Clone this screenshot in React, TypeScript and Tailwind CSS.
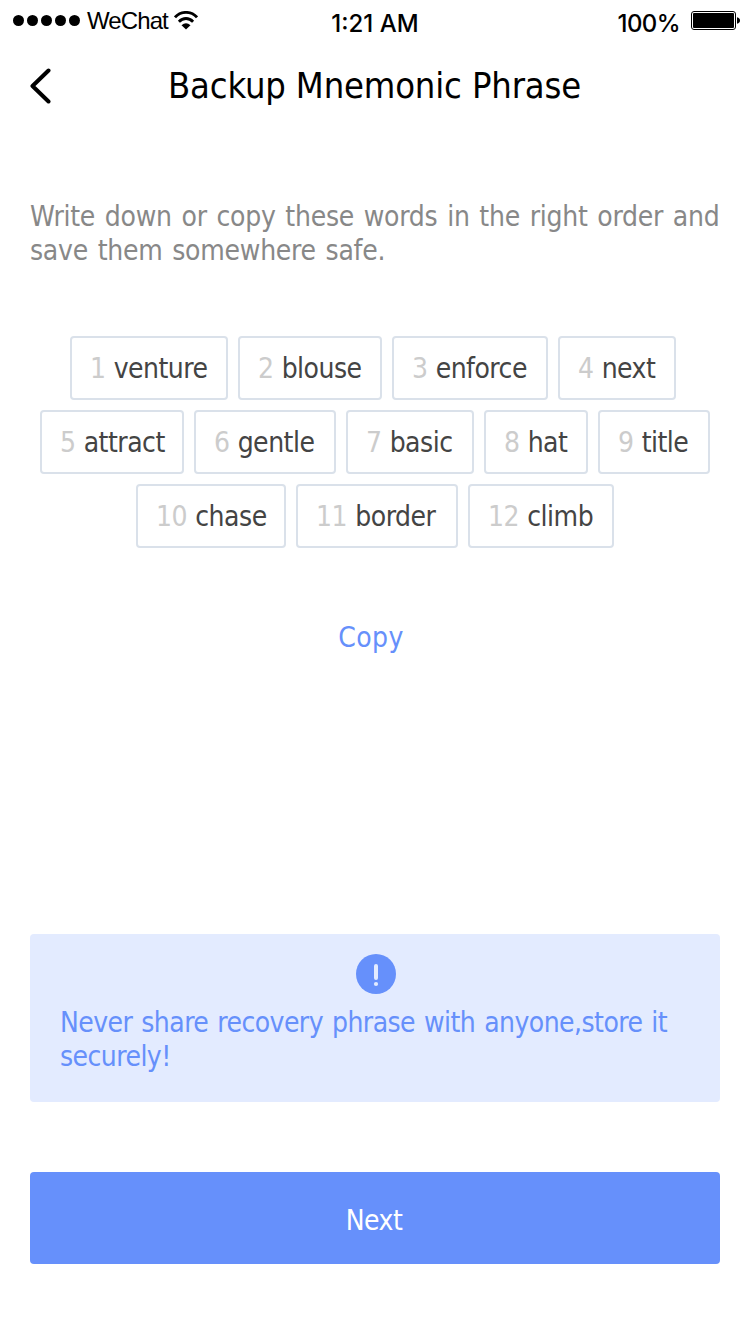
const rows = [
  { start: 1, pad: "pl-[70px]", words: [["venture", "w-[158px]"], ["blouse", "w-[144px]"], ["enforce", "w-[156px]"], ["next", "w-[118px]"]] },
  { start: 5, pad: "pl-[40px]", words: [["attract", "w-[144px]"], ["gentle", "w-[142px]"], ["basic", "w-[128px]"], ["hat", "w-[104px]"], ["title", "w-[112px]"]] },
  { start: 10, pad: "pl-[136px]", words: [["chase", "w-[150px]"], ["border", "w-[162px]"], ["climb", "w-[146px]"]] },
];

function StatusBar() {
  return (
    <header className="grid h-10 shrink-0 grid-cols-3 items-center pl-[13px] pr-[10px] text-black">
      <div className="flex items-center">
        <div className="flex gap-[3px]">
          {[0, 1, 2, 3, 4].map((i) => (
            <span key={i} className="size-[11px] rounded-full bg-black" />
          ))}
        </div>
        <span className="ml-[7px] pt-0.5 font-['Liberation_Sans',sans-serif] text-2xl leading-[38px] tracking-[-0.9px]">WeChat</span>
        <svg className="ml-1.5 h-[19px] w-6" viewBox="0 0 24 19" fill="none" stroke="#000" strokeWidth="2.8">
          <path d="M1 6.3C7-.3 17-.3 23 6.3M4.9 10.8C9 6.4 15 6.4 19.1 10.8" />
          <path d="M7.5 14.2Q12 10.4 16.5 14.2L12 18.5Z" fill="#000" stroke="none" />
        </svg>
      </div>
      <span className="pr-[3px] pt-2 text-center font-['Inter',sans-serif] text-2xl font-medium">1:21 AM</span>
      <div className="flex items-center justify-end">
        <span className="pt-2 font-['Inter',sans-serif] text-2xl font-medium tracking-[-0.6px]">100%</span>
        <svg className="ml-[11px] h-[19px] w-[49px]" viewBox="0 0 49 19">
          <rect x=".5" y=".5" width="44" height="18" rx="2.5" fill="none" stroke="#000" />
          <rect x="2" y="2" width="41" height="15" rx="1" />
          <path d="M46 6.3Q49 7 49 9.5T46 12.7Z" />
        </svg>
      </div>
    </header>
  );
}

export default function App() {
  return (
    <div className="flex h-[1334px] w-[750px] flex-col bg-white font-['DejaVu_Sans_Condensed','DejaVu_Sans',sans-serif] text-[28px] [font-stretch:condensed]">
      <StatusBar />
      <div className="grid h-[92px] shrink-0 grid-cols-[60px_1fr_60px] items-center px-[30px] text-black">
        <svg className="h-9 w-[21px]" viewBox="0 0 21 36" fill="none" stroke="#000" strokeWidth="4" strokeLinecap="round" strokeLinejoin="round">
          <path d="M18.5 2.5L2.5 18L18.5 33.5" />
        </svg>
        <h1 className="whitespace-nowrap pr-px text-center text-4xl tracking-[-0.15px]">Backup Mnemonic Phrase</h1>
      </div>
      <p className="mt-[68px] whitespace-nowrap px-[30px] leading-[34px] tracking-[-0.26px] text-[#888] [word-spacing:2px]">
        Write down or copy these words in the right order and<br />save them somewhere safe.
      </p>
      <div className="mt-[68px] flex flex-col gap-2.5 text-[#444]">
        {rows.map((r) => (
          <div key={r.start} className={`flex gap-2.5 ${r.pad}`}>
            {r.words.map(([w, c], i) => (
              <div key={w} className={`flex h-16 items-center gap-2 rounded border-2 border-[#dae1ea] px-[18px] pt-0.5 ${c}`}>
                <span className="tracking-[-0.4px] text-[#ccc]">{r.start + i}</span>
                <span className="tracking-[-0.5px]">{w}</span>
              </div>
            ))}
          </div>
        ))}
      </div>
      <button className="mt-[70px] h-10 self-center pr-2 leading-10 tracking-[0.4px] text-[#6690fb]">Copy</button>
      <section className="mx-[30px] mt-[276px] flex h-[168px] shrink-0 flex-col rounded bg-[#e3ebff] px-[30px] pt-5 text-[#6690fb]">
        <svg className="ml-[296px] size-10" viewBox="0 0 40 40">
          <circle cx="20" cy="20" r="20" fill="#6690fb" />
          <path d="M20 12V24" stroke="#e3ebff" strokeWidth="4" strokeLinecap="round" />
          <circle cx="20" cy="30" r="2.1" fill="#e3ebff" />
        </svg>
        <p className="mt-3 whitespace-nowrap leading-[34px] tracking-[-0.55px] [word-spacing:1.5px]">Never share recovery phrase with anyone,store it<br />securely!</p>
      </section>
      <button className="mx-[30px] mt-[70px] h-[92px] shrink-0 rounded bg-[#6690fb] pr-0.5 pt-1.5 tracking-[-0.5px] text-white">Next</button>
    </div>
  );
}
